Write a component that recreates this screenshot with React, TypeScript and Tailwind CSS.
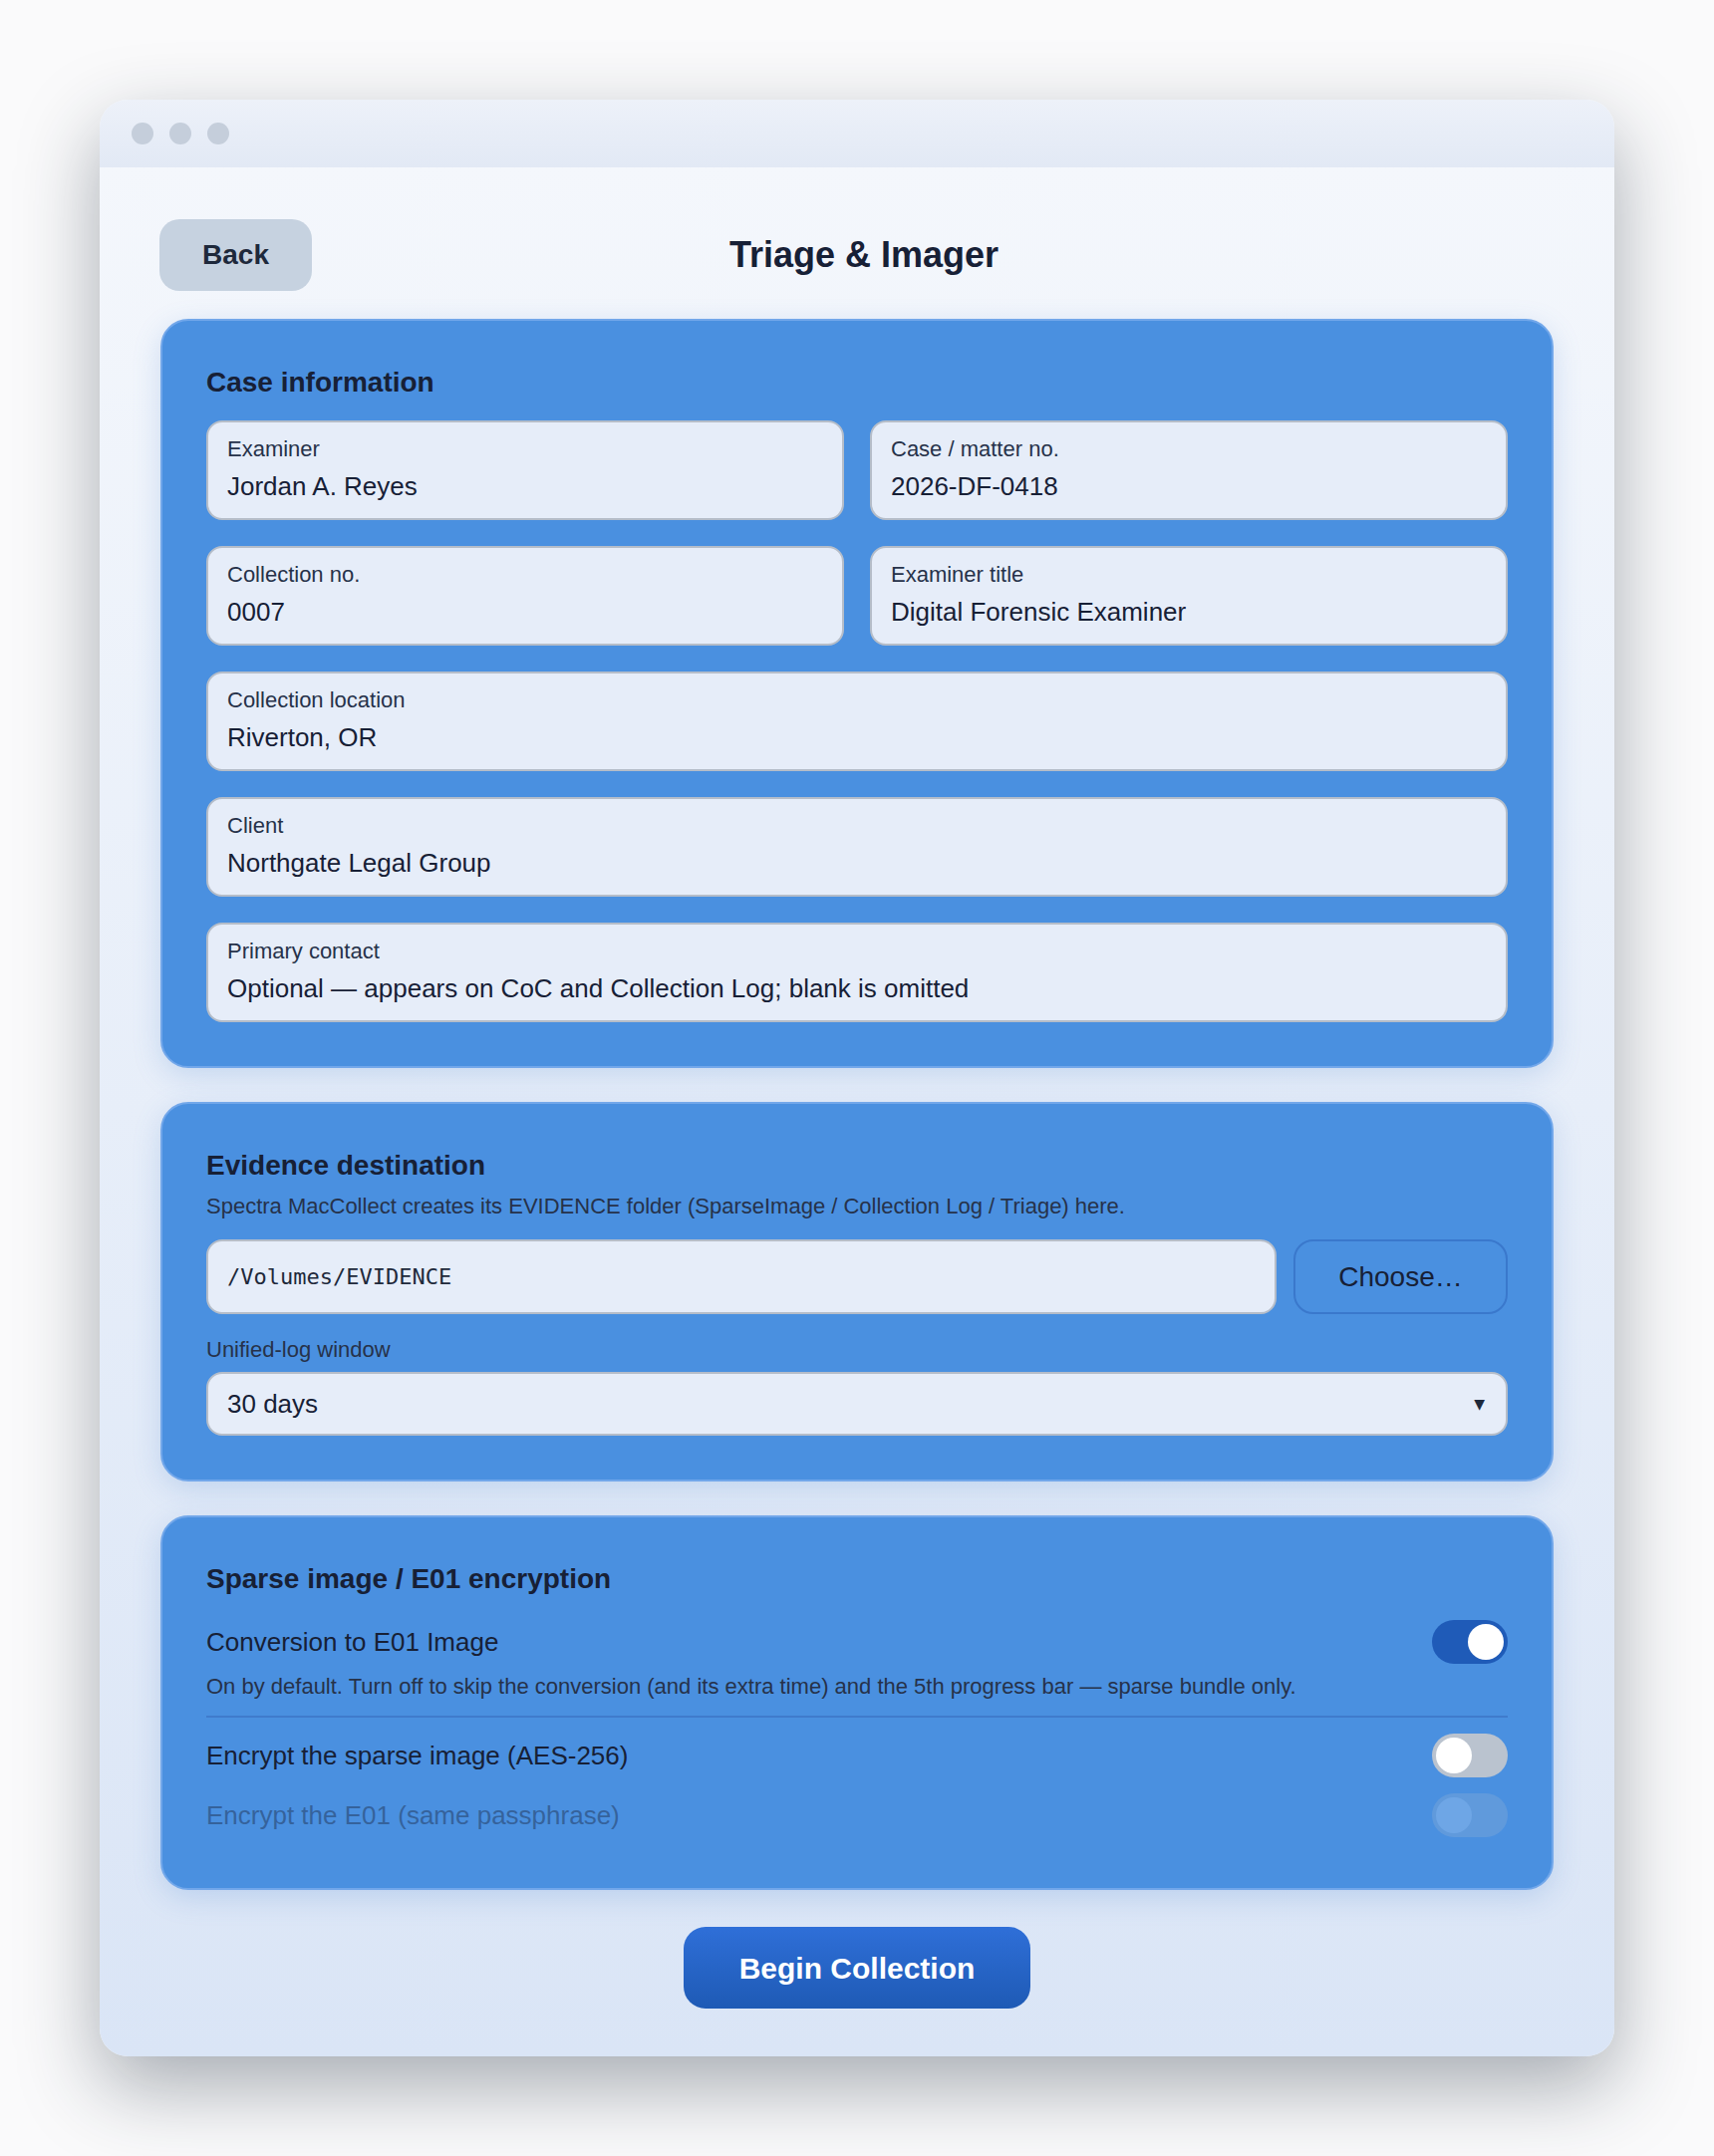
import React from "react";

const SANS = "font-['Liberation_Sans',Arial,sans-serif]";

type FieldProps = { label: string; value: string; wide?: boolean };

function Field({ label, value, wide }: FieldProps) {
  return (
    <div
      className={`${wide ? "col-span-2" : ""} h-[100px] rounded-[16px] border-2 border-[#b5bdc9] bg-[#e6edf9] px-[19px] pt-[13px]`}
    >
      <div className="text-[22px] leading-[28px] text-[#26324a]">{label}</div>
      <div className="mt-[6px] text-[26px] leading-[34px] text-[#172036]">{value}</div>
    </div>
  );
}

function Toggle({ on, disabled }: { on: boolean; disabled?: boolean }) {
  return (
    <div
      className={`flex h-[44px] w-[76px] shrink-0 items-center rounded-full px-[4px] ${
        on ? "justify-end bg-[#1f5bb8]" : "justify-start bg-[#bac3cf]"
      } ${disabled ? "opacity-20" : ""}`}
    >
      <div className="h-[36px] w-[36px] rounded-full bg-white" />
    </div>
  );
}

function Card({ title, children, className = "" }: { title: string; children: React.ReactNode; className?: string }) {
  return (
    <section
      className={`rounded-[28px] border-2 border-[#72a7ea] bg-[#4a90e0] px-[44px] pt-[44px] shadow-[0_8px_28px_rgba(74,130,210,0.22)] ${className}`}
    >
      <h2 className="text-[28px] font-bold leading-[36px] text-[#172036]">{title}</h2>
      {children}
    </section>
  );
}

export default function App() {
  return (
    <div className={`min-h-[2164px] w-full bg-[#fafafb] pl-[100px] pt-[100px] ${SANS}`}>
      <div className="w-[1520px] overflow-hidden rounded-[28px] shadow-[0_30px_80px_rgba(30,41,59,0.38)]">
        {/* title bar */}
        <div className="flex h-[68px] items-center gap-[16px] bg-linear-to-b from-[#edf1f9] to-[#e2e9f5] pl-[32px]">
          <span className="h-[22px] w-[22px] rounded-full bg-[#c5cedb]" />
          <span className="h-[22px] w-[22px] rounded-full bg-[#c5cedb]" />
          <span className="h-[22px] w-[22px] rounded-full bg-[#c5cedb]" />
        </div>

        <div className="bg-linear-to-b from-[#f4f7fc] via-[#e7eef9] to-[#dae5f6] px-[61px] pb-[48px] pt-[52px]">
          {/* header */}
          <header className="grid h-[72px] grid-cols-[1fr_auto_1fr] items-center">
            <div>
              <button
                type="button"
                className="-ml-px h-[72px] w-[153px] rounded-[20px] bg-[#c6d2e0] text-[28px] font-bold text-[#1e293b]"
              >
                Back
              </button>
            </div>
            <h1 className="pl-[14px] text-[36px] font-bold text-[#172036]">Triage &amp; Imager</h1>
            <div />
          </header>

          <div className="mt-[28px] flex flex-col gap-[34px]">
            <Card title="Case information" className="pb-[44px]">
              <div className="mt-[20px] grid grid-cols-2 gap-x-[26px] gap-y-[26px]">
                <Field label="Examiner" value="Jordan A. Reyes" />
                <Field label="Case / matter no." value="2026-DF-0418" />
                <Field label="Collection no." value="0007" />
                <Field label="Examiner title" value="Digital Forensic Examiner" />
                <Field label="Collection location" value="Riverton, OR" wide />
                <Field label="Client" value="Northgate Legal Group" wide />
                <Field
                  label="Primary contact"
                  value="Optional — appears on CoC and Collection Log; blank is omitted"
                  wide
                />
              </div>
            </Card>

            <Card title="Evidence destination" className="pb-[44px]">
              <p className="mt-[9px] text-[22px] leading-[28px] text-[#26324a]">
                Spectra MacCollect creates its EVIDENCE folder (SparseImage / Collection Log / Triage) here.
              </p>
              <div className="mt-[19px] flex gap-[17px]">
                <div className="flex h-[75px] flex-1 items-center rounded-[16px] border-2 border-[#b5bdc9] bg-[#e6edf9] px-[19px] font-['DejaVu_Sans_Mono',monospace] text-[22px] text-[#1e293b]">
                  /Volumes/EVIDENCE
                </div>
                <button
                  type="button"
                  className="h-[75px] w-[215px] rounded-[20px] border-2 border-[#3a78cc] text-[28px] text-[#172036]"
                >
                  Choose…
                </button>
              </div>
              <div className="mt-[22px] text-[22px] leading-[28px] text-[#26324a]">Unified-log window</div>
              <div className="mt-[8px] flex h-[64px] items-center justify-between rounded-[16px] border-2 border-[#b5bdc9] bg-[#e6edf9] pl-[19px] pr-[21px]">
                <span className="text-[26px] text-[#172036]">30 days</span>
                <span className="font-['DejaVu_Sans',sans-serif] text-[14px] text-[#1e293b]">▼</span>
              </div>
            </Card>

            <Card title="Sparse image / E01 encryption" className="pb-[51px]">
              <div className="mt-[23px] flex items-center justify-between">
                <span className="text-[26px] text-[#172036]">Conversion to E01 Image</span>
                <Toggle on />
              </div>
              <p className="mt-[9px] text-[22px] leading-[28px] text-[#26324a]">
                On by default. Turn off to skip the conversion (and its extra time) and the 5th progress bar — sparse bundle only.
              </p>
              <div className="mt-[15px] h-[2px] bg-[#3f7bcc]" />
              <div className="mt-[16px] flex items-center justify-between">
                <span className="text-[26px] text-[#172036]">Encrypt the sparse image (AES-256)</span>
                <Toggle on={false} />
              </div>
              <div className="mt-[16px] flex items-center justify-between">
                <span className="text-[26px] text-[#172036] opacity-40">Encrypt the E01 (same passphrase)</span>
                <Toggle on={false} disabled />
              </div>
            </Card>
          </div>

          <div className="mt-[37px] flex justify-center">
            <button
              type="button"
              className="h-[82px] w-[348px] rounded-[22px] bg-linear-to-b from-[#2f6fd8] to-[#1e5ab5] text-[30px] font-bold text-white"
            >
              Begin Collection
            </button>
          </div>
        </div>
      </div>
    </div>
  );
}
